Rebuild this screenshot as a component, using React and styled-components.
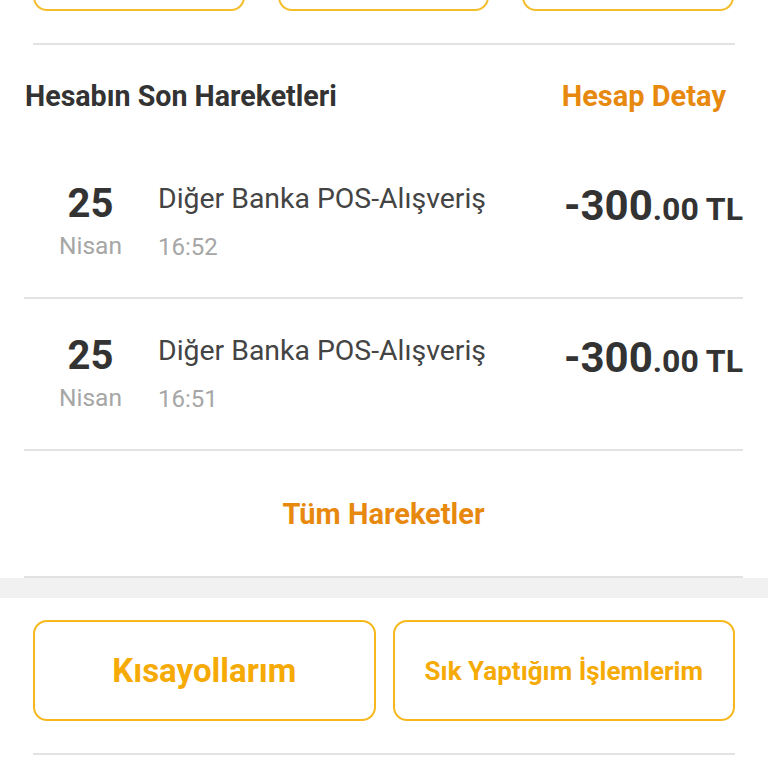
import React from "react";
import styled, { createGlobalStyle } from "styled-components";

const transactions = [
  { day: "25", month: "Nisan", title: "Diğer Banka POS-Alışveriş", time: "16:52", whole: "-300", cents: ".00 TL" },
  { day: "25", month: "Nisan", title: "Diğer Banka POS-Alışveriş", time: "16:51", whole: "-300", cents: ".00 TL" },
];

const App = () => {
  return (
    <Page>
      <GlobalStyle />
      <TopActions>
        <OutlineButton />
        <OutlineButton />
        <OutlineButton />
      </TopActions>
      <Divider inset="33px" top="32px" />

      <Header>
        <Title>Hesabın Son Hareketleri</Title>
        <LinkText>Hesap Detay</LinkText>
      </Header>

      <List>
        {transactions.map((item, i) => (
          <Row key={i}>
            <DateCol>
              <Day>{item.day}</Day>
              <Month>{item.month}</Month>
            </DateCol>
            <Info>
              <Description>{item.title}</Description>
              <Time>{item.time}</Time>
            </Info>
            <Amount>
              {item.whole}
              <Cents>{item.cents}</Cents>
            </Amount>
          </Row>
        ))}
        <AllLink>
          <LinkText>Tüm Hareketler</LinkText>
        </AllLink>
      </List>

      <Band />

      <Shortcuts>
        <ShortcutButton size="33px">Kısayollarım</ShortcutButton>
        <ShortcutButton size="26px">Sık Yaptığım İşlemlerim</ShortcutButton>
      </Shortcuts>
      <Divider inset="33px" top="32px" />
    </Page>
  );
};

const GlobalStyle = createGlobalStyle`
  body {
    margin: 0;
    background: #ffffff;
    font-family: Roboto, "Noto Sans", "Liberation Sans", sans-serif;
    overflow: hidden;
  }
`;

const Page = styled.div`
  width: 768px;
  height: 768px;
  overflow: hidden;
  background: #ffffff;
`;

const TopActions = styled.div`
  display: grid;
  grid-template-columns: repeat(3, 1fr);
  gap: 33px;
  padding: 0 34px 0 33px;
  margin-top: -49px;
`;

const OutlineButton = styled.div`
  height: 56px;
  border: 2px solid #f4bd2a;
  border-radius: 14px;
`;

const Divider = styled.div`
  height: 2px;
  background: #e2e2e2;
  margin: ${(p) => p.top} ${(p) => p.inset} 0;
`;

const Header = styled.div`
  height: 102px;
  display: flex;
  align-items: center;
  justify-content: space-between;
  padding: 0 42px 0 25px;
`;

const Title = styled.div`
  font-size: 28.6px;
  font-weight: 700;
  color: #333333;
`;

const LinkText = styled.div`
  font-size: 29px;
  font-weight: 700;
  color: #e8890f;
`;

const List = styled.div`
  padding: 0 25px 0 24px;
`;

const Row = styled.div`
  height: 114px;
  display: flex;
  align-items: flex-start;
  padding-top: 36px;
  border-bottom: 2px solid #e2e2e2;
`;

const DateCol = styled.div`
  width: 133px;
  text-align: center;
`;

const Day = styled.div`
  font-size: 40px;
  line-height: 42px;
  font-weight: 700;
  color: #333333;
`;

const Month = styled.div`
  margin-top: 6px;
  font-size: 24.5px;
  line-height: 30px;
  color: #a6a6a6;
`;

const Info = styled.div`
  flex: 1;
  padding-left: 1px;
  margin-top: -1px;
`;

const Description = styled.div`
  font-size: 28.4px;
  line-height: 34px;
  color: #444444;
`;

const Time = styled.div`
  margin-top: 16px;
  font-size: 24px;
  line-height: 30px;
  color: #a6a6a6;
`;

const Amount = styled.div`
  margin-top: 2px;
  font-size: 42px;
  line-height: 42px;
  font-weight: 700;
  color: #333333;
  white-space: nowrap;
`;

const Cents = styled.span`
  font-size: 32px;
`;

const AllLink = styled.div`
  height: 125px;
  display: flex;
  align-items: center;
  justify-content: center;
  border-bottom: 2px solid #e2e2e2;
`;

const Band = styled.div`
  height: 20px;
  background: #f1f1f1;
`;

const Shortcuts = styled.div`
  display: grid;
  grid-template-columns: 1fr 1fr;
  gap: 17px;
  padding: 22px 33px 0;
`;

const ShortcutButton = styled.div`
  height: 101px;
  box-sizing: border-box;
  border: 2px solid #f6b81c;
  border-radius: 14px;
  display: flex;
  align-items: center;
  justify-content: center;
  font-size: ${(p) => p.size};
  font-weight: 700;
  color: #f5aa05;
`;

export default App;
